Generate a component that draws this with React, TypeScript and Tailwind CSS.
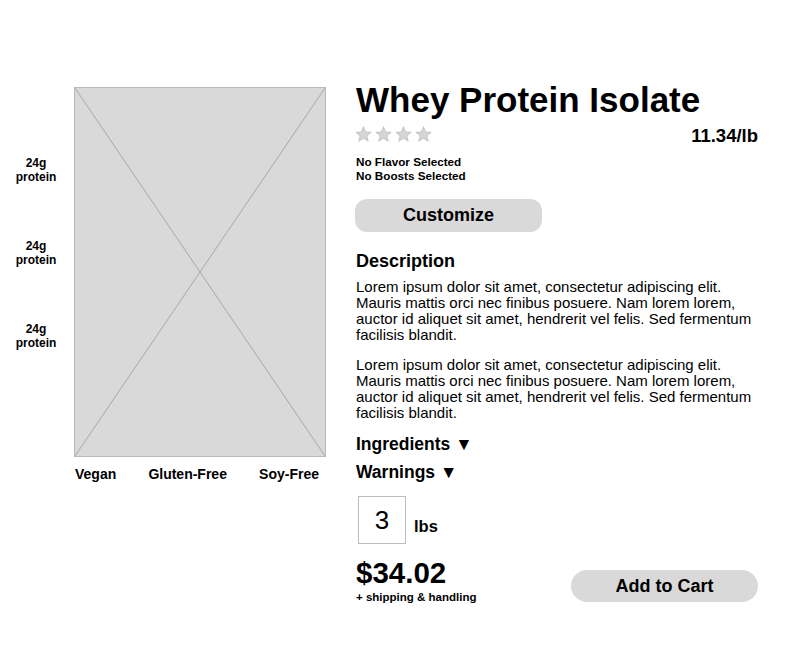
import React from "react";

const Star = () => (
  <svg width="17" height="16" viewBox="0 0 24 23">
    <polygon
      points="12,1 15,8.6 23,9 16.8,14.2 18.8,22 12,17.6 5.2,22 7.2,14.2 1,9 9,8.6"
      fill="#d6d6d6"
      stroke="#b5b5b5"
      strokeWidth="1"
      strokeLinejoin="round"
    />
  </svg>
);

const lorem =
  "Lorem ipsum dolor sit amet, consectetur adipiscing elit. Mauris mattis orci nec finibus posuere. Nam lorem lorem, auctor id aliquet sit amet, hendrerit vel felis. Sed fermentum facilisis blandit.";

export default function App() {
  return (
    <div className="w-[800px] h-[663px] bg-white text-black flex pt-[80px] font-['Liberation_Sans',Arial,sans-serif]">
      {/* protein labels */}
      <div className="w-[72px] flex flex-col items-center mt-[76px] gap-[55px]">
        {[0, 1, 2].map((i) => (
          <div key={i} className="text-center text-[12px] leading-[14px] font-bold">
            24g
            <br />
            protein
          </div>
        ))}
      </div>

      {/* image column */}
      <div className="ml-[2px] w-[252px] mt-[7px] flex flex-col">
        <div className="relative w-[252px] h-[370px] bg-[#d9d9d9] border border-[#b9b9b9]">
          <svg className="absolute inset-0 w-full h-full" viewBox="0 0 252 370" preserveAspectRatio="none">
            <line x1="0" y1="0" x2="252" y2="370" stroke="#a6a6a6" strokeWidth="1" />
            <line x1="252" y1="0" x2="0" y2="370" stroke="#a6a6a6" strokeWidth="1" />
          </svg>
        </div>
        <div className="mt-[8px] flex justify-between pl-[1px] pr-[7px] text-[14px] leading-[18px] font-bold">
          <span>Vegan</span>
          <span>Gluten-Free</span>
          <span>Soy-Free</span>
        </div>
      </div>

      {/* details */}
      <div className="ml-[30px] w-[402px] flex flex-col">
        <h1 className="text-[35px] leading-[40px] font-bold">Whey Protein Isolate</h1>
        <div className="mt-[4px] h-[20px] flex items-center justify-between">
          <div className="flex gap-[3px] -ml-[1px]">
            <Star />
            <Star />
            <Star />
            <Star />
          </div>
          <span className="mt-[3px] text-[18.5px] font-bold">11.34/lb</span>
        </div>
        <div className="mt-[11px] text-[11.7px] leading-[14px] font-bold">
          <div>No Flavor Selected</div>
          <div>No Boosts Selected</div>
        </div>
        <button className="mt-[16px] w-[187px] h-[33px] rounded-[12px] bg-[#d9d9d9] text-[18px] font-bold -ml-[1px]">
          Customize
        </button>
        <h2 className="mt-[18px] text-[18px] leading-[22px] font-bold">Description</h2>
        <p className="mt-[7px] text-[15px] leading-[16px] pr-[2px]">{lorem}</p>
        <p className="mt-[14px] text-[15px] leading-[16px] pr-[2px]">{lorem}</p>
        <div className="mt-[11px] text-[17.5px] leading-[24px] font-bold">Ingredients ▼</div>
        <div className="mt-[4px] text-[17.5px] leading-[24px] font-bold">Warnings ▼</div>
        <div className="mt-[12px] flex items-end">
          <div className="ml-[2px] w-[48px] h-[48px] border border-[#bcbcbc] flex items-center justify-center text-[26px]">
            3
          </div>
          <span className="ml-[8px] mb-[5px] text-[16.5px] font-bold">lbs</span>
        </div>
        <div className="mt-[13px] flex justify-between items-start">
          <div>
            <div className="text-[29.5px] leading-[32px] font-bold">$34.02</div>
            <div className="mt-[1px] text-[11.5px] leading-[14px] font-bold">+ shipping &amp; handling</div>
          </div>
          <button className="mt-[13px] w-[187px] h-[32px] rounded-[16px] bg-[#d9d9d9] text-[18px] font-bold">
            Add to Cart
          </button>
        </div>
      </div>
    </div>
  );
}
